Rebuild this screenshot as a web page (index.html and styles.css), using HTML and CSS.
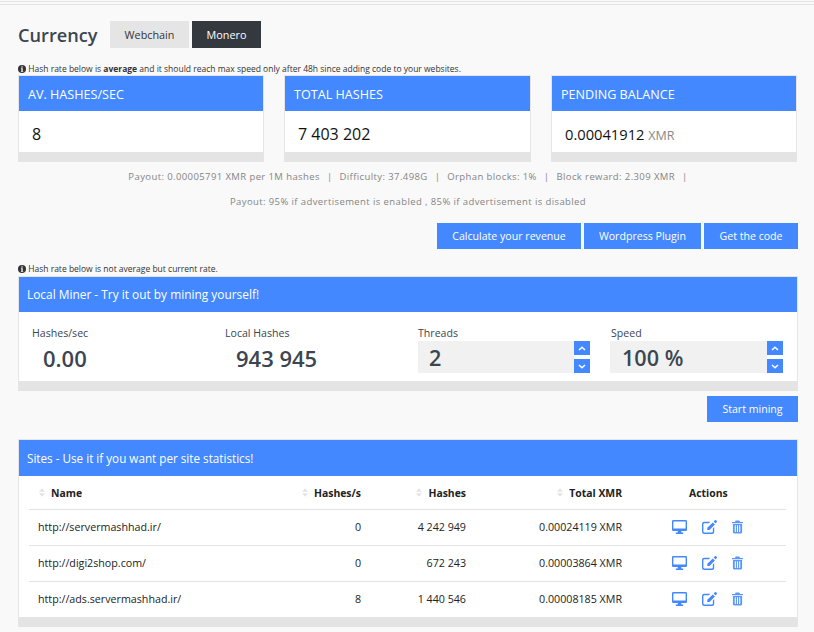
FILE: index.html
```html
<!DOCTYPE html>
<html lang="en">
<head>
<meta charset="utf-8">
<title>Currency</title>
<link rel="stylesheet" href="styles.css">
</head>
<body>
<svg class="defs" width="0" height="0" aria-hidden="true">
  <symbol id="i-info" viewBox="0 0 16 16"><circle cx="8" cy="8" r="8" fill="currentColor"/><rect x="6.8" y="2.6" width="2.6" height="2.6" fill="#fff"/><path d="M5.8 6.4h3.6v5.6h1v1.6H5.8V12h1V8H5.8z" fill="#fff"/></symbol>
  <symbol id="i-desktop" viewBox="0 0 15 14"><path fill="currentColor" fill-rule="evenodd" d="M1.2 0h12.6A1.2 1.2 0 0 1 15 1.2v8.6A1.2 1.2 0 0 1 13.8 11H9.3v1.6h1.9V14H3.8v-1.4h1.9V11H1.2A1.2 1.2 0 0 1 0 9.800V1.200A1.200 1.200 0 0 1 1.200 0zM1.400 1.400V8.600H13.600V1.400z"/></symbol>
  <symbol id="i-edit" viewBox="0 0 15 14"><path fill="currentColor" d="M2.200 1.800H8.300L6.900 3.200H2.400A1 1 0 0 0 1.400 4.200V11.500A1 1 0 0 0 2.400 12.500H9.800A1 1 0 0 0 10.800 11.500V8.400L12.200 7V11.700A2.200 2.200 0 0 1 10 14H2.200A2.200 2.200 0 0 1 0 11.700V4A2.200 2.200 0 0 1 2.200 1.800z"/><path fill="currentColor" d="M10.800 2.400 12.900 4.500 7.500 10H5.300V7.800zM11.600 1.600 12.900.3C13.300 0 13.700 0 14 .3L14.800 1.100C15.100 1.400 15.100 1.800 14.800 2.100L13.600 3.600z"/></symbol>
  <symbol id="i-trash" viewBox="0 0 12 14"><path fill="currentColor" fill-rule="evenodd" d="M4 0H8L8.800 1.500H12V3H0V1.500H3.200zM1 3.800H11V12.800A1.200 1.200 0 0 1 9.800 14H2.200A1.200 1.200 0 0 1 1 12.800zM3 5.200V12.400H4.200V5.200zM5.400 5.200V12.400H6.600V5.200zM7.800 5.200V12.400H9V5.200z"/></symbol>
  <symbol id="i-up" viewBox="0 0 8 5"><path d="M1 4 4 1.200 7 4" fill="none" stroke="currentColor" stroke-width="1.500"/></symbol>
  <symbol id="i-down" viewBox="0 0 8 5"><path d="M1 1 4 3.800 7 1" fill="none" stroke="currentColor" stroke-width="1.500"/></symbol>
  <symbol id="i-sort" viewBox="0 0 7 10"><path fill="currentColor" d="M3.500 0 7 4H0zM0 6H7L3.500 10z"/></symbol>
</svg>

<main class="page">
  <header class="currency">
    <h1 class="title">Currency</h1>
    <div class="tabs">
      <a class="tab">Webchain</a>
      <a class="tab tab-active">Monero</a>
    </div>
  </header>

  <p class="note note-first"><svg class="info"><use href="#i-info"/></svg> Hash rate below is <b>average</b> and it should reach max speed only after 48h since adding code to your websites.</p>

  <section class="cards">
    <article class="panel">
      <h2 class="panel-head card-head">AV. HASHES/SEC</h2>
      <div class="card-body">8</div>
    </article>
    <article class="panel">
      <h2 class="panel-head card-head">TOTAL HASHES</h2>
      <div class="card-body">7 403 202</div>
    </article>
    <article class="panel">
      <h2 class="panel-head card-head">PENDING BALANCE</h2>
      <div class="card-body card-balance">0.00041912 <small>XMR</small></div>
    </article>
  </section>

  <div class="stats">
    <p class="stats-line">Payout: 0.00005791 XMR per 1M hashes<span class="sep">|</span>Difficulty: 37.498G<span class="sep">|</span>Orphan blocks: 1%<span class="sep">|</span>Block reward: 2.309 XMR<span class="sep">|</span></p>
    <p class="stats-line stats-second">Payout: 95% if advertisement is enabled , 85% if advertisement is disabled</p>
  </div>

  <div class="actions">
    <a class="btn">Calculate your revenue</a>
    <a class="btn">Wordpress Plugin</a>
    <a class="btn btn-code">Get the code</a>
  </div>

  <p class="note note-second"><svg class="info"><use href="#i-info"/></svg> Hash rate below is not average but current rate.</p>

  <section class="panel">
    <h2 class="panel-head wide-head">Local Miner - Try it out by mining yourself!</h2>
    <div class="miner">
      <div class="metric">
        <div class="metric-label">Hashes/sec</div>
        <div class="metric-value">0.00</div>
      </div>
      <div class="metric">
        <div class="metric-label">Local Hashes</div>
        <div class="metric-value">943 945</div>
      </div>
      <div class="metric">
        <div class="metric-label">Threads</div>
        <div class="stepper">
          <div class="stepper-value">2</div>
          <div class="stepper-btns">
            <span class="step"><svg><use href="#i-up"/></svg></span>
            <span class="step"><svg><use href="#i-down"/></svg></span>
          </div>
        </div>
      </div>
      <div class="metric">
        <div class="metric-label">Speed</div>
        <div class="stepper stepper-speed">
          <div class="stepper-value">100 %</div>
          <div class="stepper-btns">
            <span class="step"><svg><use href="#i-up"/></svg></span>
            <span class="step"><svg><use href="#i-down"/></svg></span>
          </div>
        </div>
      </div>
    </div>
  </section>

  <div class="actions actions-miner"><a class="btn btn-start">Start mining</a></div>

  <section class="panel panel-sites">
    <h2 class="panel-head wide-head sites-head">Sites - Use it if you want per site statistics!</h2>
    <div class="table-wrap">
      <table class="sites">
        <colgroup><col class="c-name"><col class="c-rate"><col class="c-hash"><col class="c-xmr"><col class="c-act"></colgroup>
        <thead>
          <tr>
            <th class="th-name"><svg class="sort"><use href="#i-sort"/></svg>Name</th>
            <th class="num"><svg class="sort"><use href="#i-sort"/></svg>Hashes/s</th>
            <th class="num"><svg class="sort"><use href="#i-sort"/></svg>Hashes</th>
            <th class="num"><svg class="sort"><use href="#i-sort"/></svg>Total XMR</th>
            <th class="th-act">Actions</th>
          </tr>
        </thead>
        <tbody>
          <tr>
            <td>http://servermashhad.ir/</td><td class="num">0</td><td class="num">4 242 949</td><td class="num">0.00024119 XMR</td>
            <td class="act"><svg class="ic ic-desktop"><use href="#i-desktop"/></svg><svg class="ic ic-edit"><use href="#i-edit"/></svg><svg class="ic ic-trash"><use href="#i-trash"/></svg></td>
          </tr>
          <tr>
            <td>http://digi2shop.com/</td><td class="num">0</td><td class="num">672 243</td><td class="num">0.00003864 XMR</td>
            <td class="act"><svg class="ic ic-desktop"><use href="#i-desktop"/></svg><svg class="ic ic-edit"><use href="#i-edit"/></svg><svg class="ic ic-trash"><use href="#i-trash"/></svg></td>
          </tr>
          <tr>
            <td>http://ads.servermashhad.ir/</td><td class="num">8</td><td class="num">1 440 546</td><td class="num">0.00008185 XMR</td>
            <td class="act"><svg class="ic ic-desktop"><use href="#i-desktop"/></svg><svg class="ic ic-edit"><use href="#i-edit"/></svg><svg class="ic ic-trash"><use href="#i-trash"/></svg></td>
          </tr>
        </tbody>
      </table>
    </div>
  </section>
</main>
</body>
</html>
```
FILE: styles.css
```css
* { box-sizing: border-box; }
html, body { margin: 0; height: 100%; }
body {
  background: #f9f9f9;
  color: #3c4650;
  font-family: "Open Sans", "Liberation Sans", sans-serif;
  font-size: 11px;
  overflow: hidden;
}
.defs { position: absolute; }
.page {
  border-top: 1px solid #e3e3e3;
  margin-top: 1px;
  width: 814px;
  padding: 0 16px 0 18px;
}
.page::before {
  content: "";
  display: block;
  height: 2px;
  border-bottom: 1px solid #e3e3e3;
  box-sizing: content-box;
  margin: 0 -16px 0 -18px;
}

.currency { display: flex; align-items: center; height: 27px; margin-top: 16px; }
.title { margin: 2px 0 0; font-size: 18.2px; font-weight: 600; color: #3c4650; width: 92px; line-height: 27px; }
.tabs { display: flex; gap: 3px; }
.tab { display: flex; align-items: center; justify-content: center; height: 27px; font-size: 10.8px; background: #e5e5e5; color: #333; width: 79px; }
.tab-active { background: #34383f; color: #fff; width: 69px; }

.note { margin: 0; height: 13px; line-height: 13px; font-size: 8.5px; color: #333; display: flex; align-items: center; white-space: pre; }
.note b { font-weight: 700; }
.note-first { margin-top: 14px; }
.info { width: 8px; height: 8px; color: #333; }

.cards { display: grid; grid-template-columns: 246px 247px 246px; gap: 20px; width: 779px; }
.panel { border: 1px solid #e6e6e6; border-bottom: 10px solid #e4e4e4; background: #fff; }
.panel-head { margin: 0; background: #4488ff; color: #fff; font-weight: 400; }
.card-head { height: 35px; line-height: 37px; padding-left: 9px; font-size: 12.6px; }
.card-body { height: 41px; line-height: 47px; padding-left: 13px; font-size: 16px; color: #111; }
.card-balance { font-size: 14.7px; }
.card-balance small { font-size: 12.5px; color: #888; }

.stats { width: 780px; text-align: center; color: #858585; font-size: 9.5px; letter-spacing: .4px; }
.stats-line { margin: 0; height: 25px; line-height: 25px; }
.stats-line:first-child { margin-top: 2px; padding-left: 7px; }
.sep { margin: 0 7px; }

.actions { display: flex; justify-content: flex-end; gap: 3px; width: 780px; margin-top: 9px; }
.btn { display: flex; align-items: center; justify-content: center; height: 26px; background: #4488ff; color: #fff; font-size: 10.6px; width: 144px; }
.actions .btn:nth-child(2) { width: 117px; }
.btn-code { width: 94px; }
.actions .btn-start { width: 91px; }
.actions-miner { margin-top: 5px; }

.note-second { margin-top: 13px; height: 14px; line-height: 14px; }

.wide-head { height: 35px; line-height: 35px; padding-left: 8px; font-size: 11.9px; }
.miner { display: grid; grid-template-columns: repeat(4, 193px); padding: 13px 0 8px 13px; height: 69px; }
.metric-label { font-size: 10.6px; line-height: 17px; color: #3c4650; height: 17px; margin-bottom: -1px; }
.metric-value { font-size: 22px; font-weight: 600; line-height: 34px; padding-left: 11px; color: #3c4650; }
.stepper { display: flex; width: 172px; height: 32px; }
.stepper-speed { width: 173px; margin-left: -1px; }
.stepper-value { flex: 1; background: #f1f1f1; font-size: 21.6px; font-weight: 600; line-height: 34px; padding-left: 11px; color: #3c4650; overflow: hidden; }
.stepper-speed .stepper-value { padding-left: 12px; }
.stepper-btns { width: 16px; display: flex; flex-direction: column; justify-content: space-between; }
.step { display: flex; align-items: center; justify-content: center; height: 14px; background: #4488ff; color: #fff; }
.step svg { width: 8px; height: 5px; }

.panel-sites { margin-top: 17px; }
.sites-head { height: 36px; line-height: 36px; font-size: 11.7px; }
.table-wrap { padding: 0 10px; height: 141px; }
.sites { border-collapse: collapse; table-layout: fixed; width: 757px; color: #222; font-size: 10.7px; }
.c-name { width: 262px; }
.c-rate { width: 70px; }
.c-hash { width: 105px; }
.c-xmr { width: 156px; }
.c-act { width: 164px; }
.sites th { height: 33px; font-weight: 700; font-size: 10.4px; color: #222; text-align: left; padding: 1px 0 0 9px; white-space: nowrap; position: relative; }
.sites td { height: 36px; padding: 0 0 0 9px; border-top: 1px solid #e3e3e3; }
.sites .num { text-align: right; padding: 0; }
.sites th.num { padding-top: 1px; }
.sites .th-name { padding-left: 22px; }
.sites .th-act { padding-left: 67px; }
.sort { position: absolute; width: 6px; height: 9px; color: #e3e3e3; margin-left: -12px; top: 12px; }
.sites .act { padding: 0 0 0 50px; vertical-align: middle; white-space: nowrap; line-height: 0; }
.ic { color: #4488ff; height: 14px; display: inline-block; vertical-align: middle; }
.ic-desktop { width: 15px; margin-right: 15px; }
.ic-edit { width: 15px; margin-right: 15px; }
.ic-trash { width: 11px; color: #5b96ff; }
```
